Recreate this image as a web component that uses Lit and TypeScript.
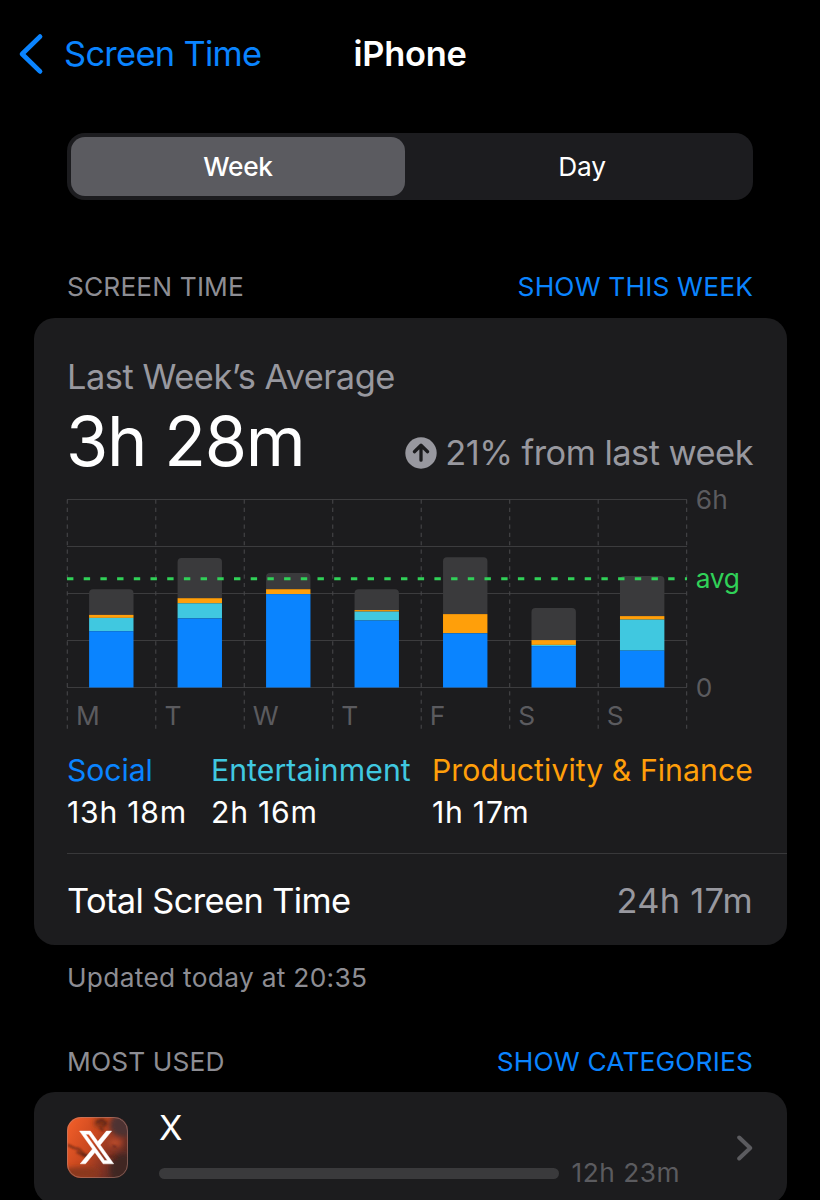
import { LitElement, html, svg, css } from "lit";
import { customElement } from "lit/decorators.js";

interface Day {
  label: string;
  /** Top edges of each stacked segment, measured up from the baseline. */
  total: number;
  orange: number;
  teal: number;
  blue: number;
}

const DAYS: Day[] = [
  { label: "M", total: 98.3, orange: 72.6, teal: 69.6, blue: 56.3 },
  { label: "T", total: 129.4, orange: 89.3, teal: 84.2, blue: 69.1 },
  { label: "W", total: 114.4, orange: 98.3, teal: 93.4, blue: 93.4 },
  { label: "T", total: 98.3, orange: 77.4, teal: 75.9, blue: 67 },
  { label: "F", total: 130.3, orange: 73.4, teal: 54.4, blue: 54.2 },
  { label: "S", total: 79.4, orange: 47.4, teal: 42.6, blue: 41.4 },
  { label: "S", total: 111.4, orange: 71.4, teal: 67.9, blue: 36.9 },
];

const LEGEND = [
  { name: "Social", time: "13h 18m", cls: "social" },
  { name: "Entertainment", time: "2h 16m", cls: "fun" },
  { name: "Productivity & Finance", time: "1h 17m", cls: "work" },
];

@customElement("usage-chart")
export class UsageChart extends LitElement {
  static styles = css`
    :host { display: block; }
    svg { display: block; overflow: visible; }
    text { font: 400 26.3px Inter, sans-serif; fill: #5b5b5f; }
    .grid { stroke: #3c3c3e; stroke-width: 1.2; }
    .dash { stroke: #454548; stroke-width: 1.1; stroke-dasharray: 4.17 4.17; }
    .total { fill: #3a3a3c; }
    .orange { fill: #ff9f0a; }
    .teal { fill: #40c8e0; }
    .blue { fill: #0a84ff; }
    .avg-line { stroke: #30d158; stroke-width: 3; stroke-dasharray: 6.4 10.3; }
    .avg { fill: #30d158; letter-spacing: -0.3px; }
    .top { letter-spacing: 0.3px; }
  `;

  render() {
    const base = 188.5;
    const step = 88.48;
    const left = 0.3;
    return html`
      <svg width="686" height="232" viewBox="0 0 686 232">
        ${[0, 1, 2, 3, 4].map((i) => svg`
          <line class="grid" x1="0" x2="620" y1=${0.5 + i * 47} y2=${0.5 + i * 47}></line>`)}
        ${[0, 1, 2, 3, 4, 5, 6, 7].map((i) => svg`
          <line class="dash" x1=${left + i * step} x2=${left + i * step} y1="0.5" y2="230.5"></line>`)}
        ${DAYS.map((d, i) => {
          const x = left + i * step + 21.8;
          const w = 44.4;
          return svg`
            <path class="total" d="M${x} ${base - d.orange}V${base - d.total + 4}q0 -4 4 -4h${w - 8}q4 0 4 4V${base - d.orange}z"></path>
            <rect class="orange" x=${x} width=${w} y=${base - d.orange} height=${d.orange - d.teal}></rect>
            <rect class="teal" x=${x} width=${w} y=${base - d.teal} height=${d.teal - d.blue}></rect>
            <rect class="blue" x=${x} width=${w} y=${base - d.blue} height=${d.blue}></rect>
            <text x=${left + i * step + 8.6} y="226.4">${d.label}</text>`;
        })}
        <line class="avg-line" x1="0" x2="620" y1="79.7" y2="79.7"></line>
        <text class="top" x="628.7" y="10">6h</text>
        <text class="avg" x="628.7" y="88.5">avg</text>
        <text x="628.7" y="198">0</text>
      </svg>
    `;
  }
}

@customElement("app-root")
export class AppRoot extends LitElement {
  static styles = css`
    :host {
      display: block;
      box-sizing: border-box;
      height: 1200px;
      overflow: hidden;
      background: #000;
      color: #fff;
      font-family: Inter, sans-serif;
      font-size: 34.4px;
      line-height: 42px;
      white-space: nowrap;
    }
    svg { display: block; flex: none; }
    .nav {
      display: grid;
      grid-template-columns: 1fr auto 1fr;
      align-items: center;
      height: 107px;
      padding: 0 18px;
    }
    .back { display: flex; align-items: center; gap: 20px; color: #0a84ff; letter-spacing: -0.68px; }
    .title { font-weight: 600; letter-spacing: -0.24px; }
    .tabs {
      display: grid;
      grid-template-columns: 334px 1fr;
      box-sizing: border-box;
      height: 66.5px;
      margin: 26px 67px 0;
      padding: 4px;
      border-radius: 18px;
      background: #1c1c1f;
      font-size: 26.3px;
      line-height: 60px;
      text-align: center;
    }
    .tab { height: 58.5px; padding-left: 10px; letter-spacing: -0.25px; }
    .tab.on { padding-left: 0; border-radius: 14px; background: #5b5b60; font-weight: 500; letter-spacing: -0.3px; }
    .head {
      display: flex;
      justify-content: space-between;
      padding: 0 67px;
      font-size: 26.3px;
      line-height: 32px;
      color: #8d8d93;
      letter-spacing: 0.14px;
    }
    .head.first { margin-top: 71px; }
    .head.second { margin-top: 52px; }
    .link { color: #0a84ff; letter-spacing: 0.18px; }
    .card { margin: 15px 33.5px 0; border-radius: 21px; background: #1c1c1e; }
    .head.second + .card { margin-top: 14px; }
    .summary { padding: 38px 33.5px 19px; }
    .caption { color: #98989f; letter-spacing: -0.46px; }
    .figures { display: flex; justify-content: space-between; align-items: center; line-height: 84px; }
    .average { margin-left: -1px; padding-top: 1px; margin-bottom: -1px; font-size: 68.4px; letter-spacing: -1.25px; }
    .change { display: flex; align-items: center; gap: 8px; margin-top: 27px; color: #98989f; line-height: 42px; letter-spacing: -0.52px; }
    usage-chart { margin-top: 17.5px; }
    .legend {
      display: grid;
      grid-template-columns: 144px 221px auto;
      margin-top: 18.5px;
      font-size: 30.2px;
      line-height: 41.7px;
    }
    .social { color: #0a84ff; letter-spacing: -0.1px; }
    .fun { color: #40c8e0; letter-spacing: 0.07px; }
    .work { color: #ff9f0a; letter-spacing: 0.05px; }
    .time { margin-top: 0.8px; letter-spacing: 0.75px; }
    .total {
      display: flex;
      justify-content: space-between;
      height: 91px;
      margin-left: 33.5px;
      padding-right: 33.5px;
      border-top: 1px solid #38383a;
      line-height: 93px;
      letter-spacing: -0.6px;
    }
    .sum { color: #98989f; letter-spacing: 0.3px; }
    .note { margin: 17px 67px 0; font-size: 26.3px; line-height: 32px; color: #8d8d93; letter-spacing: 0.3px; }
    .app { display: flex; align-items: center; height: 112px; padding: 0 33.5px; }
    .info { display: flex; flex: 1; flex-direction: column; margin-left: 31px; padding-top: 1px; }
    .usage { display: flex; align-items: center; gap: 13px; margin-top: 8px; }
    .bar { width: 399.5px; height: 11px; border-radius: 6px; background: #3a3a3c; }
    .spent { font-size: 26.3px; line-height: 32px; color: #5b5b5f; letter-spacing: 0.5px; }
  `;

  render() {
    return html`
      <header class="nav">
        <div class="back">
          <svg width="26" height="42" viewBox="0 0 26 42">
            <path d="M22 3.6L4.1 21L22 38.4" fill="none" stroke="currentColor" stroke-width="4.8" stroke-linecap="round" stroke-linejoin="round"></path>
          </svg>
          <span>Screen Time</span>
        </div>
        <div class="title">iPhone</div>
        <span></span>
      </header>
      <div class="tabs"><div class="tab on">Week</div><div class="tab">Day</div></div>

      <div class="head first"><span>SCREEN TIME</span><span class="link">SHOW THIS WEEK</span></div>
      <section class="card">
        <div class="summary">
          <div class="caption">Last Week’s Average</div>
          <div class="figures">
            <span class="average">3h 28m</span>
            <span class="change">
              <svg width="32" height="32" viewBox="0 0 32 32">
                <circle cx="16" cy="16" r="15.7" fill="#98989f"></circle>
                <path d="M16 8.8V23.2M9.4 14.7L16 8.3L22.6 14.7" fill="none" stroke="#1c1c1e" stroke-width="3.3" stroke-linecap="round" stroke-linejoin="round"></path>
              </svg>
              <span>21% from last week</span>
            </span>
          </div>
          <usage-chart></usage-chart>
          <div class="legend">
            ${LEGEND.map((l) => html`<div><div class=${l.cls}>${l.name}</div><div class="time">${l.time}</div></div>`)}
          </div>
        </div>
        <div class="total"><span>Total Screen Time</span><span class="sum">24h 17m</span></div>
      </section>
      <div class="note">Updated today at 20:35</div>

      <div class="head second"><span>MOST USED</span><span class="link">SHOW CATEGORIES</span></div>
      <section class="card">
        <div class="app">
          <svg width="61" height="61" viewBox="0 0 61 61">
            <defs>
              <linearGradient id="mars" x1="0" y1="0.2" x2="1" y2="0.75">
                <stop offset="0" stop-color="#ee5c28"></stop>
                <stop offset="0.4" stop-color="#c9481f"></stop>
                <stop offset="0.7" stop-color="#863423"></stop>
                <stop offset="1" stop-color="#4a2724"></stop>
              </linearGradient>
              <filter id="soft" x="-50%" y="-50%" width="200%" height="200%"><feGaussianBlur stdDeviation="2.8"></feGaussianBlur></filter>
              <filter id="fine" x="-50%" y="-50%" width="200%" height="200%"><feGaussianBlur stdDeviation="0.8"></feGaussianBlur></filter>
              <clipPath id="tile"><rect width="61" height="61" rx="14"></rect></clipPath>
            </defs>
            <g clip-path="url(#tile)">
              <rect width="61" height="61" fill="url(#mars)"></rect>
              <g filter="url(#soft)">
                <ellipse cx="56" cy="8" rx="13" ry="12" fill="#4d3130"></ellipse>
                <ellipse cx="48" cy="26" rx="7" ry="5" fill="#b5482b"></ellipse>
                <ellipse cx="12" cy="56" rx="20" ry="6" fill="#8a371f"></ellipse>
                <ellipse cx="56" cy="52" rx="13" ry="15" fill="#402624"></ellipse>
                <ellipse cx="34" cy="6" rx="7" ry="5" fill="#7e3218"></ellipse>
              </g>
              <g filter="url(#fine)" fill="none" stroke="#5c2416" stroke-width="1.6" stroke-linecap="round">
                <path d="M1 28l6 3 5 1 5 5 5 2M10 35l7 4 6 1M30 5l5-2 4 3-3 3M33 11l3 2M46 29l3 1M42 40l5-1 3 3"></path>
              </g>
            </g>
            <rect x="0.5" y="0.5" width="60" height="60" rx="13.5" fill="none" stroke="#b88a80" stroke-opacity="0.5"></rect>
            <path transform="translate(10.6 10.3) scale(1.58 1.68)" fill="#fff" stroke="#fff" stroke-width="0.3" d="M18.244 2.25h3.308l-7.227 8.26 8.502 11.24H16.17l-5.214-6.817L4.99 21.75H1.68l7.73-8.835L1.254 2.25H8.08l4.713 6.231zm-1.161 17.52h1.833L7.084 4.126H5.117z"></path>
          </svg>
          <div class="info">
            <span>X</span>
            <div class="usage"><div class="bar"></div><span class="spent">12h 23m</span></div>
          </div>
          <svg width="18" height="26" viewBox="0 0 18 26">
            <path d="M4.2 2.5L15.2 13L4.2 23.5" fill="none" stroke="#5b5b5f" stroke-width="4" stroke-linecap="round" stroke-linejoin="round"></path>
          </svg>
        </div>
      </section>
    `;
  }
}
